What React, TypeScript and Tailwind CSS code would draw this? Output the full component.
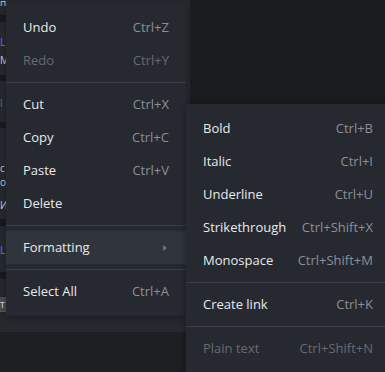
import React from "react";

type Item =
  | { sep: true }
  | { label: string; shortcut?: string; disabled?: boolean; active?: boolean; sub?: boolean };

const mainItems: Item[] = [
  { label: "Undo", shortcut: "Ctrl+Z" },
  { label: "Redo", shortcut: "Ctrl+Y", disabled: true },
  { sep: true },
  { label: "Cut", shortcut: "Ctrl+X" },
  { label: "Copy", shortcut: "Ctrl+C" },
  { label: "Paste", shortcut: "Ctrl+V" },
  { label: "Delete" },
  { sep: true },
  { label: "Formatting", active: true, sub: true },
  { sep: true },
  { label: "Select All", shortcut: "Ctrl+A" },
];

const subItems: Item[] = [
  { label: "Bold", shortcut: "Ctrl+B" },
  { label: "Italic", shortcut: "Ctrl+I" },
  { label: "Underline", shortcut: "Ctrl+U" },
  { label: "Strikethrough", shortcut: "Ctrl+Shift+X" },
  { label: "Monospace", shortcut: "Ctrl+Shift+M" },
  { sep: true },
  { label: "Create link", shortcut: "Ctrl+K" },
  { sep: true },
  { label: "Plain text", shortcut: "Ctrl+Shift+N", disabled: true },
];

function Menu({ items, padR }: { items: Item[]; padR: string }) {
  return (
    <div className="flex flex-col py-2">
      {items.map((it, i) =>
        "sep" in it ? (
          <div key={i} className="my-[5px] h-px bg-[#3a3e45]" />
        ) : (
          <div
            key={i}
            className={`flex h-[33px] items-center justify-between pl-[17px] ${padR} ${
              it.active ? "bg-[#30353c]" : ""
            }`}
          >
            <span className={it.disabled ? "text-[#676b71]" : "text-[#e9eaeb]"}>{it.label}</span>
            {it.shortcut && (
              <span className={it.disabled ? "text-[#676b71]" : "text-[#8c9096]"}>{it.shortcut}</span>
            )}
            {it.sub && (
              <svg width="6" height="8" viewBox="0 0 6 8" className="mr-[1px]">
                <path d="M1 1 L5 4 L1 7 Z" fill="#6d737b" />
              </svg>
            )}
          </div>
        )
      )}
    </div>
  );
}

function LeftStrip() {
  const rows: { h: number; c?: string; t?: string; tc?: string }[] = [
    { h: 6, t: "п", tc: "#c8c8c8" },
    { h: 9 },
    { h: 7, c: "#1a1b1e" },
    { h: 14 },
    { h: 11, t: "L", tc: "#8b6fd6" },
    { h: 7 },
    { h: 11, t: "M", tc: "#cfcfcf" },
    { h: 10 },
    { h: 6, c: "#1a1b1e" },
    { h: 16 },
    { h: 11, t: "l", tc: "#6f7379" },
    { h: 14 },
    { h: 6, c: "#1a1b1e" },
    { h: 34 },
    { h: 11, t: "c", tc: "#cfcfcf" },
    { h: 3 },
    { h: 11, t: "o", tc: "#cfcfcf" },
    { h: 12 },
    { h: 11, t: "И", tc: "#cfcfcf" },
    { h: 9 },
    { h: 7, c: "#1a1b1e" },
    { h: 18 },
    { h: 11, t: "L", tc: "#8b6fd6" },
    { h: 17 },
    { h: 7, c: "#1a1b1e" },
    { h: 18 },
    { h: 14, c: "#4a4d52", t: "т", tc: "#e0e0e0" },
  ];
  return (
    <div className="flex w-[190px] flex-col overflow-hidden bg-[#262a30] text-[10px] leading-none">
      {rows.map((r, i) => (
        <div
          key={i}
          style={{ height: r.h, background: r.c, color: r.tc }}
          className="flex w-[14px] items-center overflow-hidden"
        >
          {r.t}
        </div>
      ))}
      <div className="h-px w-[64px] bg-[#55585d]" />
      <div className="h-[17px]" />
    </div>
  );
}

export default function App() {
  return (
    <div
      className="relative h-[372px] w-[385px] overflow-hidden bg-[#1b1c20] text-[13px]"
      style={{ fontFamily: '"Open Sans", "Noto Sans", sans-serif' }}
    >
      <div className="flex h-[332px]">
        <LeftStrip />
        <div className="flex-1 bg-[#1b1c20]" />
      </div>
      <div className="h-[40px] bg-[#1e1f23]" />

      <div className="absolute left-[6px] top-[3px] w-[180px] bg-[#262930] shadow-[0_2px_8px_rgba(0,0,0,0.35)]">
        <Menu items={mainItems} padR="pr-[17px]" />
      </div>

      <div className="absolute left-[186px] top-[104px] w-[205px] bg-[#262930] shadow-[0_2px_8px_rgba(0,0,0,0.35)]">
        <Menu items={subItems} padR="pr-[18px]" />
      </div>
    </div>
  );
}
